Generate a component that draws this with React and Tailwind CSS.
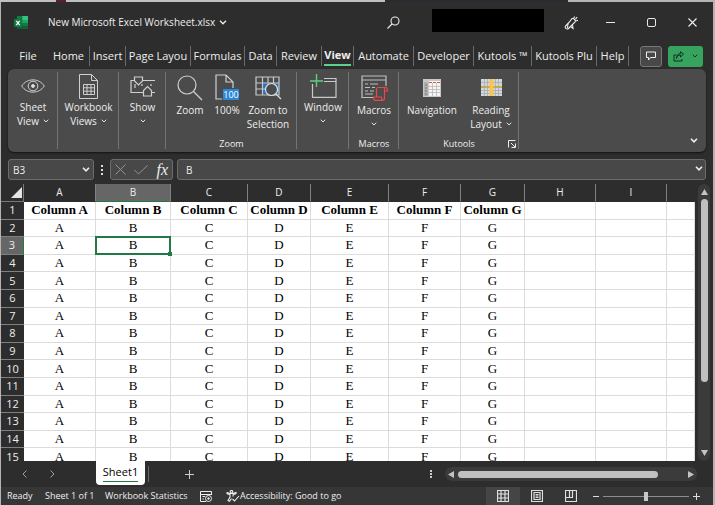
import React from "react";

const tabs = [
  { name: "Home", width: "w-[42px]" },
  { name: "Insert", width: "w-[36px]" },
  { name: "Page Layou", width: "w-[65px]" },
  { name: "Formulas", width: "w-[54px]" },
  { name: "Data", width: "w-[32px]" },
  { name: "Review", width: "w-[45px]" },
  { name: "View", width: "w-[32px]", active: true },
  { name: "Automate", width: "w-[60px]" },
  { name: "Developer", width: "w-[60px]" },
  { name: "Kutools ™", width: "w-[58px]" },
  { name: "Kutools Plu", width: "w-[65px]" },
  { name: "Help", width: "w-[32px]" },
];

const columns = [
  { id: "A", width: "w-[72px]" },
  { id: "B", width: "w-[75px]" },
  { id: "C", width: "w-[77px]" },
  { id: "D", width: "w-[63px]" },
  { id: "E", width: "w-[78px]" },
  { id: "F", width: "w-[72px]" },
  { id: "G", width: "w-[64px]" },
  { id: "H", width: "w-[71px]" },
  { id: "I", width: "w-[71px]" },
  { id: "", width: "" },
];
const filled = "ABCDEFG";
const rows = Array.from({ length: 15 }, (_, i) => i + 1);

function Chevron({ className = "h-[5px] w-2", stroke = 1.3 }) {
  return (
    <svg viewBox="0 0 8 5" className={className} fill="none" stroke="currentColor" strokeWidth={stroke} aria-hidden="true">
      <path d="M1 0.8 L4 3.8 L7 0.8" />
    </svg>
  );
}

function ExcelLogo() {
  return (
    <svg viewBox="0 0 14 14" className="h-3.5 w-3.5" aria-hidden="true">
      <rect x="3" y="0" width="11" height="13" rx="1" fill="#21a366" />
      <path d="M3 0h5.5v6.5H3z" fill="#107c41" />
      <path d="M8.500 0H13a1 1 0 0 1 1 1v3H8.500z" fill="#33c481" />
      <path d="M3 7h11v5a1 1 0 0 1-1 1H4a1 1 0 0 1-1-1z" fill="#185c37" />
      <path d="M8.500 7H14v3H8.500z" fill="#107c41" />
      <rect x="0" y="3" width="8" height="8" rx="1" fill="#107c41" />
      <path d="M2.300 4.800L5.700 9.200M5.700 4.800L2.300 9.200" stroke="#fff" strokeWidth="1.200" />
    </svg>
  );
}

function EyeIcon() {
  return (
    <svg viewBox="0 0 24 14" className="h-3.5 w-6" fill="none" stroke="#d0d0d0" aria-hidden="true">
      <path d="M0.700 7C6 -1.200 18 -1.200 23.300 7C18 15.200 6 15.200 0.700 7z" />
      <circle cx="12" cy="7" r="4.800" />
      <circle cx="12" cy="7" r="1.500" fill="#e8e8e8" />
    </svg>
  );
}

function WorkbookIcon() {
  return (
    <svg viewBox="0 0 19 25" className="h-[25px] w-[19px]" fill="none" stroke="#d0d0d0" aria-hidden="true">
      <path d="M0.500 0.500H12.500L18.500 6.500V24.500H0.500z" />
      <path d="M12.500 0.500V6.500H18.500" />
      <path d="M4.500 10.500H15.500V20.500H4.500zM4.500 13.800H15.500M4.500 17.200H15.500M8 10.500V20.500M12 10.500V20.500" />
    </svg>
  );
}

function ShowIcon() {
  return (
    <svg viewBox="0 0 26 21" className="h-[21px] w-[26px]" fill="none" stroke="#d0d0d0" strokeWidth="1.200" aria-hidden="true">
      <path d="M4.500 1H12.500V5L8.500 9L4.500 5z" />
      <path d="M4.500 4.500H1V16.500H13M12.500 4.500H25M22 16.500H25M5 8V12M12 8V10M21 8V10" />
      <path d="M13.500 20V14.500L17.500 10.500L21.500 14.500V20z" />
    </svg>
  );
}

function MagnifierIcon() {
  return (
    <svg viewBox="0 0 26 26" className="h-[26px] w-[26px]" fill="none" stroke="#d0d0d0" strokeWidth="1.200" aria-hidden="true">
      <circle cx="10" cy="10" r="9" />
      <path d="M16.500 16.500L25 25" />
    </svg>
  );
}

function HundredIcon() {
  return (
    <svg viewBox="0 0 24 27" className="h-[27px] w-6" fill="none" stroke="#d0d0d0" aria-hidden="true">
      <path d="M7 25H1V1H11L18 8V14M11 1V8H18" strokeWidth="1.200" />
      <rect x="8" y="15" width="16" height="11" fill="#2b88d8" stroke="none" />
      <text x="16" y="24" textAnchor="middle" fill="#fff" stroke="none" className="font-['Open_Sans',sans-serif] text-[9px]">100</text>
    </svg>
  );
}

function ZoomSelectionIcon() {
  return (
    <svg viewBox="0 0 27 24" className="h-6 w-[27px]" fill="none" stroke="#c8c8c8" strokeWidth="1.200" aria-hidden="true">
      <rect x="8" y="7" width="16" height="11" fill="#1d73c4" stroke="none" />
      <path d="M1 1H24V19H1zM1 7H24M1 13H10M7.500 1V19M13 1V7M18.500 1V7" />
      <circle cx="16.500" cy="13.500" r="6" fill="#4b4b4b" stroke="#e0e0e0" />
      <path d="M20.800 17.800L26 23" stroke="#e0e0e0" />
    </svg>
  );
}

function WindowIcon() {
  return (
    <svg viewBox="0 0 27 24" className="h-6 w-[27px]" fill="none" stroke="#c8c8c8" strokeWidth="1.200" aria-hidden="true">
      <path d="M2.500 10V23.400H26V4.500H14M14 7.500H26" />
      <path d="M0 7H13M6.500 0V13" stroke="#5fcf7f" strokeWidth="1.400" />
    </svg>
  );
}

function MacrosIcon() {
  return (
    <svg viewBox="0 0 27 26" className="h-[26px] w-[27px]" fill="none" stroke="#c0c0c0" strokeWidth="1.200" aria-hidden="true">
      <path d="M12 22.500H1V1H25V11M1 5H25" />
      <path d="M4 9H7M9 9H17M4 12.500H9M11 12.500H14M4 16H7M9 16H13M4 19H12" />
      <path d="M15.500 21.500V14.500C15.500 13 16.500 12.500 17.500 12.500H25C26.300 12.500 26.400 13.500 26.400 16H23.500V23C23.500 24.500 23 25.300 21.500 25.300H14C12.800 25.300 12.600 24 12.600 22H20.500C20.500 24 20.700 25.300 21.500 25.300M23.500 16V14C23.500 13 24 12.500 25 12.500" stroke="#e8474c" />
    </svg>
  );
}

function NavigationIcon() {
  return (
    <svg viewBox="0 0 18 18" className="h-[18px] w-[18px]" aria-hidden="true">
      <rect width="18" height="18" fill="#c8c8c8" />
      <path d="M1 3H5V17H1z" fill="#b0b0b0" />
      <path d="M6 2H17V17H6z" fill="#f4f4f4" />
      <path d="M2 6H4M2 9H4M2 12H4M2 15H4" stroke="#777" />
      <path d="M6 7.500H17M6 10.500H17M6 13.500H17M9.500 4V17M13.500 4V17" stroke="#b8b8b8" strokeWidth="0.800" />
      <path d="M6 3.500H17" stroke="#e0583f" strokeDasharray="3 1" />
    </svg>
  );
}

function ReadingIcon() {
  return (
    <svg viewBox="0 0 21 17" className="h-[17px] w-[21px]" aria-hidden="true">
      <rect width="21" height="17" fill="#d2d6de" />
      <path d="M0 3.500H21M0 11.500H21M0 14.500H21M3.500 0V17M6.500 0V17M14.500 0V17M17.500 0V17" stroke="#a4a9b4" strokeWidth="0.800" />
      <path d="M0 8H21" stroke="#c9a750" strokeWidth="2" />
      <path d="M10.500 0V17" stroke="#fbc54d" strokeWidth="4" />
    </svg>
  );
}

function RibbonButton({ icon, lines, menu, width = "w-full", low }) {
  const last = lines.length - 1;
  return (
    <button className={`flex shrink-0 flex-col items-center whitespace-nowrap text-[10px] leading-[14px] ${width}`}>
      <span className={`flex items-center justify-center ${low ? "h-[31px]" : "h-7"}`}>{icon}</span>
      {lines.map((line, i) => (
        <span key={line} className="flex items-center gap-1">
          {line}
          {menu && i === last && last > 0 && <Chevron className="h-1 w-1.5" />}
        </span>
      ))}
      {menu && last === 0 && (
        <span className="flex h-3.5 items-center">
          <Chevron className="h-1 w-1.5" />
        </span>
      )}
    </button>
  );
}

function RibbonGroup({ width, label, launcher, children }) {
  return (
    <div className={`flex shrink-0 flex-col border-r border-[#747474] pl-px ${width}`}>
      <div className="flex h-[66px] shrink-0">{children}</div>
      {label && (
        <div className="relative text-center text-[9px] leading-3">
          {label}
          {launcher && (
            <button aria-label="Kutools options" className="absolute right-0.5 top-0.5">
              <svg viewBox="0 0 8 8" className="h-2 w-2" fill="none" stroke="currentColor" aria-hidden="true">
                <path d="M7.500 0.500H0.500V7.500M3 3L7 7M7.500 3.500V7.500H3.500" />
              </svg>
            </button>
          )}
        </div>
      )}
    </div>
  );
}

function TitleBar() {
  return (
    <header className="flex h-[41px] shrink-0 items-center pl-[13px] pr-4">
      <ExcelLogo />
      <h1 className="ml-5 whitespace-nowrap text-[10px]">New Microsoft Excel Worksheet.xlsx</h1>
      <button aria-label="File menu" className="ml-1">
        <Chevron />
      </button>
      <div className="flex-1" />
      <button aria-label="Search">
        <svg viewBox="0 0 13 13" className="h-[13px] w-[13px]" fill="none" stroke="currentColor" strokeWidth="1.100" aria-hidden="true">
          <circle cx="8" cy="5" r="4" />
          <path d="M5 8L0.500 12.500" />
        </svg>
      </button>
      <div className="-mt-1 ml-8 h-[23px] w-28 bg-black" />
      <button aria-label="What's new" className="ml-5">
        <svg viewBox="0 0 14 14" className="h-3.5 w-3.5" fill="none" stroke="currentColor" strokeWidth="1.100" aria-hidden="true">
          <path d="M9.500 2.500L12 5L4.500 12.500C3 13.700 0.500 12.500 1.500 10L4 7.500C5.500 6 7 4 8 2.500z" />
          <path d="M4 7.500L3.500 12M6.500 10.500L9 12.500L8.500 8.500M10 2L10.500 0.500M11.500 3L13.200 1.200M12.300 4.500H14" />
        </svg>
      </button>
      <button aria-label="Minimize" className="ml-7 h-px w-[9px] bg-[#e8e8e8]" />
      <button aria-label="Maximize" className="ml-8 h-[9px] w-[9px] rounded-[2px] border border-[#e8e8e8]" />
      <button aria-label="Close" className="ml-8">
        <svg viewBox="0 0 9 9" className="h-[9px] w-[9px]" stroke="currentColor" strokeWidth="1.100" aria-hidden="true">
          <path d="M0.500 0.500L8.500 8.500M8.500 0.500L0.500 8.500" />
        </svg>
      </button>
    </header>
  );
}

function TabRow() {
  return (
    <nav className="flex h-[26px] shrink-0 items-center pl-[7px] pr-2.5 text-[11px]">
      <button className="w-10 shrink-0 text-center">File</button>
      {tabs.map((tab) => (
        <button
          key={tab.name}
          className={`flex h-5 shrink-0 items-center justify-center whitespace-nowrap border-r border-[#6a6a6a] ${tab.width}`}
        >
          <span className={tab.active ? "border-b-2 border-[#5fcf8f] font-bold leading-[18px]" : "leading-[18px]"}>{tab.name}</span>
        </button>
      ))}
      <div className="flex-1" />
      <button aria-label="Comments" className="flex h-[21px] w-[22px] items-center justify-center rounded-[3px] border border-[#777] bg-[#484848]">
        <svg viewBox="0 0 10 10" className="h-2.5 w-2.5" fill="none" stroke="currentColor" aria-hidden="true">
          <path d="M0.500 1H9.500V6.500H4.500L2.500 9V6.500H0.500z" />
        </svg>
      </button>
      <button aria-label="Share" className="ml-1.5 flex h-[21px] w-[35px] items-center justify-center gap-2 rounded-[3px] bg-[#36a35e] text-[#12301d]">
        <svg viewBox="0 0 11 11" className="h-[11px] w-[11px]" fill="none" stroke="currentColor" aria-hidden="true">
          <path d="M3.500 4H1V10H9V8M3.500 7.500C4 5 5.500 4 7.500 4V6L10.500 3.200L7.500 0.800V2.500C5 2.500 3.500 4.500 3.500 7.500z" />
        </svg>
        <Chevron className="h-1 w-1.5" />
      </button>
    </nav>
  );
}

function Ribbon() {
  return (
    <section aria-label="View ribbon" className="mx-[7px] flex h-[83px] shrink-0 rounded-md bg-[#4b4b4b] py-[3px] shadow-[0_1px_2px_rgba(0,0,0,0.6)]">
      <RibbonGroup width="w-[50px]">
        <RibbonButton icon={<EyeIcon />} lines={["Sheet", "View"]} menu />
      </RibbonGroup>
      <RibbonGroup width="w-[61px]">
        <RibbonButton icon={<WorkbookIcon />} lines={["Workbook", "Views"]} menu />
      </RibbonGroup>
      <RibbonGroup width="w-[47px]">
        <RibbonButton icon={<ShowIcon />} lines={["Show"]} menu />
      </RibbonGroup>
      <RibbonGroup width="w-[131px]" label="Zoom">
        <RibbonButton icon={<MagnifierIcon />} lines={["Zoom"]} width="w-[46px]" low />
        <RibbonButton icon={<HundredIcon />} lines={["100%"]} width="w-7" low />
        <RibbonButton icon={<ZoomSelectionIcon />} lines={["Zoom to", "Selection"]} width="w-[54px]" low />
      </RibbonGroup>
      <RibbonGroup width="w-[52px]">
        <RibbonButton icon={<WindowIcon />} lines={["Window"]} menu />
      </RibbonGroup>
      <RibbonGroup width="w-[50px]" label="Macros">
        <RibbonButton icon={<MacrosIcon />} lines={["Macros"]} menu low />
      </RibbonGroup>
      <RibbonGroup width="w-[120px]" label="Kutools" launcher>
        <RibbonButton icon={<NavigationIcon />} lines={["Navigation"]} width="w-16" low />
        <div className="mb-2 mt-1 w-px bg-[#747474]" />
        <RibbonButton icon={<ReadingIcon />} lines={["Reading", "Layout"]} menu width="w-[54px]" low />
      </RibbonGroup>
      <div className="flex flex-1 items-end justify-end pb-1.5 pr-2">
        <button aria-label="Collapse ribbon">
          <Chevron stroke={1.6} />
        </button>
      </div>
    </section>
  );
}

function FormulaBar() {
  return (
    <div className="mx-[7px] mt-[7px] flex h-[21px] shrink-0 text-[10px]">
      <div className="relative w-[86px]">
        <select aria-label="Name box" className="h-full w-full appearance-none rounded-[3px] border border-[#6c6c6c] bg-[#484848] px-1 leading-none">
          <option>B3</option>
        </select>
        <Chevron className="pointer-events-none absolute right-1 top-2 h-[5px] w-2" stroke={1.6} />
      </div>
      <div className="flex w-4 flex-col items-center justify-center gap-0.5">
        <i className="h-0.5 w-0.5 bg-[#ddd]" />
        <i className="h-0.5 w-0.5 bg-[#ddd]" />
        <i className="h-0.5 w-0.5 bg-[#ddd]" />
      </div>
      <div className="flex w-[63px] items-center justify-between rounded-[3px] border border-[#6c6c6c] bg-[#484848] px-1">
        <button aria-label="Cancel">
          <svg viewBox="0 0 11 11" className="h-[11px] w-[11px]" stroke="#929292" aria-hidden="true">
            <path d="M0.500 0.500L10.500 10.500M10.500 0.500L0.500 10.500" />
          </svg>
        </button>
        <button aria-label="Enter">
          <svg viewBox="0 0 14 10" className="h-2.5 w-3.5" fill="none" stroke="#929292" aria-hidden="true">
            <path d="M0.500 5L4.500 9L13.500 0.500" />
          </svg>
        </button>
        <button aria-label="Insert function" className="font-['Liberation_Serif',serif] text-[16px] italic leading-4">
          fx
        </button>
      </div>
      <div className="relative ml-1 flex-1">
        <input aria-label="Formula" defaultValue="B" className="h-full w-full rounded-[3px] border border-[#6c6c6c] bg-[#484848] px-2 outline-none" />
        <Chevron className="pointer-events-none absolute right-[3px] top-[7px] h-[5px] w-2" stroke={1.6} />
      </div>
    </div>
  );
}

function Grid() {
  return (
    <div className="mt-1 flex min-h-0 flex-1">
      <div className="min-w-0 flex-1 overflow-hidden">
        <table className="h-[282px] w-full table-fixed border-separate border-spacing-0 bg-white text-center">
          <thead>
            <tr className="h-[18px] bg-[#2d2d2d] text-[10px] leading-[15px]">
              <th aria-label="Select all" className="w-[23px] border-b border-r border-[#777] p-0">
                <svg viewBox="0 0 11 11" className="ml-auto mr-px h-[11px] w-[11px]" aria-hidden="true">
                  <path d="M11 0V11H0z" fill="#e4e4e4" />
                </svg>
              </th>
              {columns.map((c, i) => (
                <th
                  key={i}
                  scope="col"
                  className={`border-b border-r p-0 font-normal ${c.width} ${c.id === "B" ? "border-r-[#808080] border-b-[#1f7a45] bg-[#666]" : c.id ? "border-r-[#808080] border-b-[#2d2d2d]" : "border-transparent"}`}
                >
                  {c.id}
                </th>
              ))}
            </tr>
          </thead>
          <tbody className="font-['Liberation_Serif','Times_New_Roman',serif] text-[13px] leading-4 text-black">
            {rows.map((r) => (
              <tr key={r}>
                <th
                  scope="row"
                  className={`border-b border-b-[#808080] p-0 font-['Open_Sans',sans-serif] text-[11px] font-normal leading-4 text-[#eee] ${r === 3 ? "border-r border-r-[#1f7a45] bg-[#666]" : "bg-[#2d2d2d]"}`}
                >
                  {r}
                </th>
                {columns.map((c, i) => {
                  const selected = r === 3 && c.id === "B";
                  const value = c.id && filled.includes(c.id) ? (r === 1 ? `Column ${c.id}` : c.id) : "";
                  return (
                    <td
                      key={i}
                      className={`whitespace-nowrap border-b border-r border-[#dcdcdc] p-0 ${r === 1 ? "font-bold" : ""} ${selected ? "relative" : ""}`}
                    >
                      {value}
                      {selected && (
                        <span className="absolute -inset-px border-2 border-[#1f7a45]">
                          <i className="absolute -bottom-[3px] -right-[3px] h-1 w-1 bg-[#1f7a45]" />
                        </span>
                      )}
                    </td>
                  );
                })}
              </tr>
            ))}
          </tbody>
        </table>
      </div>
      <div className="flex w-[18px] shrink-0 flex-col items-center">
        <div className="flex w-3 flex-1 flex-col items-center rounded-full bg-[#3b3b3b] py-[5px]">
          <svg viewBox="0 0 7 6" className="h-1.5 w-[7px]" aria-label="Scroll up">
            <path d="M3.500 0L7 6H0z" fill="#c4c4c4" />
          </svg>
          <div className="mb-[68px] mt-1 w-[7px] flex-1 rounded-full bg-[#c0c0c0]" />
          <svg viewBox="0 0 7 6" className="h-1.5 w-[7px]" aria-label="Scroll down">
            <path d="M3.500 6L7 0H0z" fill="#c4c4c4" />
          </svg>
        </div>
      </div>
    </div>
  );
}

function SheetBar() {
  return (
    <div className="flex h-[26px] shrink-0 items-center pl-[21px] pr-4">
      <button aria-label="Previous sheet">
        <svg viewBox="0 0 5 8" className="h-2 w-[5px]" fill="none" stroke="#a0a0a0" aria-hidden="true">
          <path d="M4.500 0.500L1 4L4.500 7.500" />
        </svg>
      </button>
      <button aria-label="Next sheet" className="ml-[23px]">
        <svg viewBox="0 0 5 8" className="h-2 w-[5px]" fill="none" stroke="#a0a0a0" aria-hidden="true">
          <path d="M0.500 0.500L4 4L0.500 7.500" />
        </svg>
      </button>
      <button className="ml-[41px] flex h-[24px] w-[49px] justify-center self-start rounded-b-[4px] bg-white text-[11px] text-black">
        <span className="h-[21px] border-b border-[#1f7a45] leading-[21px]">Sheet1</span>
      </button>
      <div className="ml-[3px] h-4 w-px bg-[#666]" />
      <button aria-label="New sheet" className="ml-9">
        <svg viewBox="0 0 9 9" className="h-[9px] w-[9px]" stroke="#d0d0d0" aria-hidden="true">
          <path d="M4.500 0V9M0 4.500H9" />
        </svg>
      </button>
      <div className="flex-1" />
      <div className="mr-[13px] flex flex-col gap-px">
        <i className="h-0.5 w-0.5 bg-[#ccc]" />
        <i className="h-0.5 w-0.5 bg-[#ccc]" />
        <i className="h-0.5 w-0.5 bg-[#ccc]" />
      </div>
      <div className="flex h-3.5 w-[252px] items-center rounded-full bg-[#3b3b3b] px-[3px]">
        <svg viewBox="0 0 6 7" className="h-[7px] w-1.5" aria-label="Scroll left">
          <path d="M0 3.500L6 0V7z" fill="#c4c4c4" />
        </svg>
        <div className="ml-1 mr-[30px] h-[7px] flex-1 rounded-full bg-[#c0c0c0]" />
        <svg viewBox="0 0 6 7" className="h-[7px] w-1.5" aria-label="Scroll right">
          <path d="M6 3.500L0 0V7z" fill="#c4c4c4" />
        </svg>
      </div>
    </div>
  );
}

function StatusBar() {
  return (
    <footer className="flex h-[18px] shrink-0 items-center whitespace-nowrap bg-[#363636] pl-1.5 pr-[13px] text-[9px]">
      <span className="w-[38px]">Ready</span>
      <span className="w-[60px]">Sheet 1 of 1</span>
      <button className="w-[95px] text-left">Workbook Statistics</button>
      <svg viewBox="0 0 13 11" className="h-[11px] w-[13px]" fill="none" stroke="currentColor" aria-hidden="true">
        <path d="M6 10.500H0.500V0.500H11.500V4M0.500 3.500H11.500M2.500 5.500H5M2.500 8H4" />
        <circle cx="8.500" cy="7.500" r="3" />
        <circle cx="8.500" cy="7.500" r="0.800" fill="currentColor" />
      </svg>
      <button className="ml-[13px] flex items-center">
        <svg viewBox="0 0 14 12" className="h-3 w-3.5" fill="none" stroke="currentColor" strokeWidth="1.100" aria-hidden="true">
          <circle cx="5.500" cy="1.800" r="1.300" />
          <path d="M1 2.500C0.500 3.500 1.500 4.200 4 4.500V7L2 10.500L3.500 11.300L5.500 8.500M7 4.500C9.500 4.200 10.500 3.500 10 2.500L7 3.500H4L1 2.500M7 4.500V6.500M6.500 9L8.500 11L13 6" />
        </svg>
        Accessibility: Good to go
      </button>
      <div className="flex-1" />
      <button aria-label="Normal view" className="flex h-[18px] w-[34px] items-center justify-center bg-[#454545]">
        <svg viewBox="0 0 12 12" className="h-3 w-3" fill="none" stroke="#e0e0e0" strokeWidth="1.200" aria-hidden="true">
          <path d="M0.500 0.500H11.500V11.500H0.500zM0.500 4H11.500M0.500 8H11.500M4 0.500V11.500M8 0.500V11.500" />
        </svg>
      </button>
      <button aria-label="Page layout view" className="flex w-[34px] justify-center">
        <svg viewBox="0 0 12 12" className="h-3 w-3" fill="none" stroke="#e0e0e0" strokeWidth="1.200" aria-hidden="true">
          <path d="M0.500 0.500H11.500V11.500H0.500zM3 2.500H9V9.500H3zM4.500 4.500H7.500M4.500 6H7.500M4.500 7.500H7.500" />
        </svg>
      </button>
      <button aria-label="Page break preview" className="flex w-[34px] justify-center">
        <svg viewBox="0 0 12 12" className="h-3 w-3" fill="none" stroke="#e0e0e0" strokeWidth="1.200" aria-hidden="true">
          <path d="M0.500 11.500V0.500H11.500V11.500zM0.500 7.500H7.500V0.500M4.500 0.500V7.500" />
        </svg>
      </button>
      <button aria-label="Zoom out" className="ml-[5px] h-px w-1.5 bg-[#ddd]" />
      <input
        aria-label="Zoom level"
        type="range"
        defaultValue="50"
        className="ml-1 h-3 w-[86px] appearance-none bg-transparent [&::-webkit-slider-runnable-track]:h-px [&::-webkit-slider-runnable-track]:bg-[#8c8c8c] [&::-webkit-slider-thumb]:-mt-1 [&::-webkit-slider-thumb]:h-[9px] [&::-webkit-slider-thumb]:w-1 [&::-webkit-slider-thumb]:appearance-none [&::-webkit-slider-thumb]:bg-[#c8c8c8]"
      />
      <button aria-label="Zoom in" className="ml-1">
        <svg viewBox="0 0 7 7" className="h-[7px] w-[7px]" stroke="#ddd" aria-hidden="true">
          <path d="M3.500 0V7M0 3.500H7" />
        </svg>
      </button>
    </footer>
  );
}

export default function App() {
  return (
    <div className="flex h-screen flex-col overflow-hidden bg-[#b4b4b4] font-['Open_Sans','Noto_Sans',sans-serif] text-[#eeeeee]">
      <div className="flex h-0.5 shrink-0">
        <div className="w-[56px] bg-[#c0c0c0]" />
        <div className="w-2.5 bg-[#5a2030]" />
        <div className="w-[319px] bg-[#c0c0c0]" />
        <div className="w-[183px] bg-[#2a2a30]" />
      </div>
      <div className="ml-px mr-0.5 flex min-h-0 flex-1 flex-col bg-[#2d2d2d]">
        <TitleBar />
        <TabRow />
        <Ribbon />
        <FormulaBar />
        <Grid />
        <SheetBar />
        <StatusBar />
      </div>
    </div>
  );
}
